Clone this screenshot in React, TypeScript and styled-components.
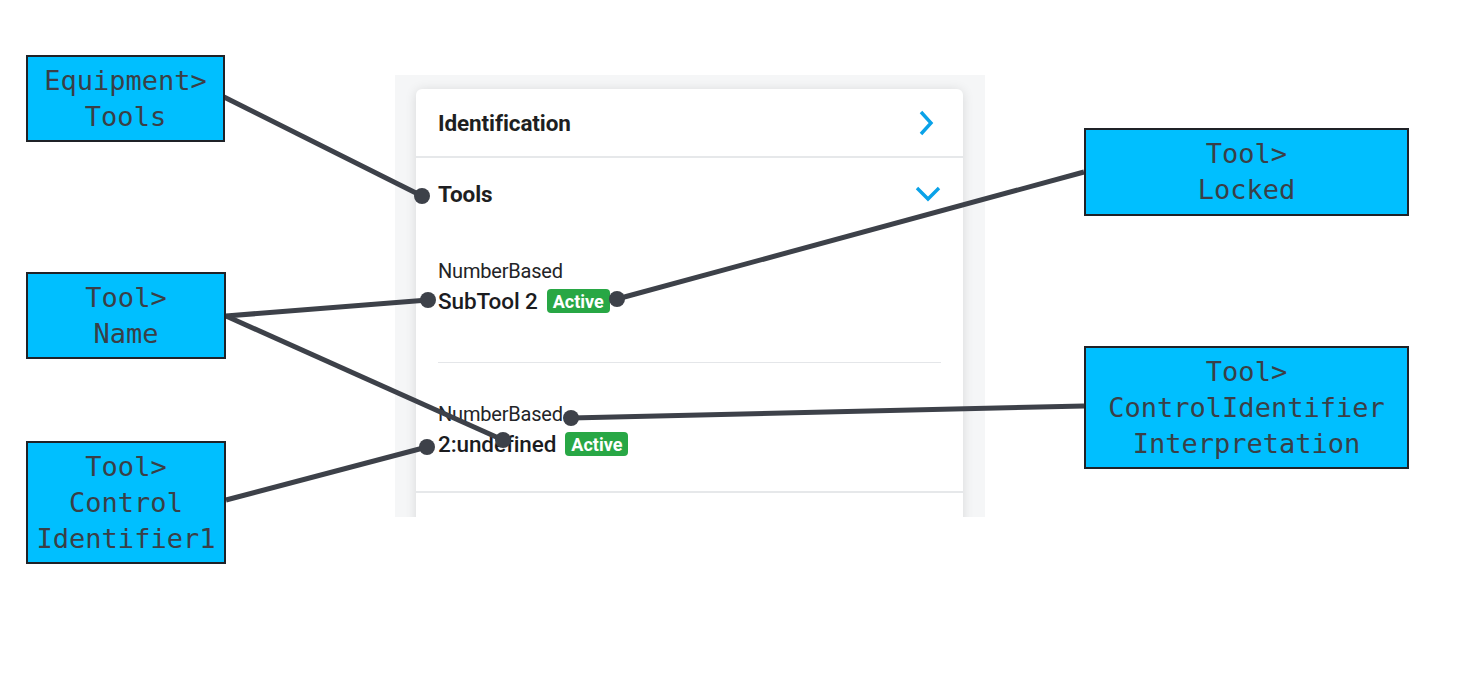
import React from "react";
import styled, { createGlobalStyle } from "styled-components";

const GlobalStyle = createGlobalStyle`
  html, body { margin: 0; padding: 0; background: #ffffff; }
  body { font-family: Roboto, "Liberation Sans", sans-serif; }
  * { box-sizing: border-box; }
`;

const Canvas = styled.div`
  position: relative;
  width: 1459px;
  height: 680px;
  overflow: hidden;
  background: #ffffff;
  padding: 75px 0 0 395px;
`;

const Backdrop = styled.div`
  width: 590px;
  height: 442px;
  background: #f5f6f7;
  overflow: hidden;
  padding: 14px 0 0 21px;
`;

const Card = styled.div`
  width: 547px;
  background: #ffffff;
  border-radius: 6px 6px 0 0;
  box-shadow: 0 1px 12px rgba(0, 0, 0, 0.12);
`;

const SectionHeader = styled.div<{ $h: number; $border?: boolean }>`
  height: ${(p) => p.$h}px;
  display: flex;
  align-items: center;
  justify-content: space-between;
  padding: 0 22px;
  border-bottom: ${(p) => (p.$border ? "2px solid #e6e8ea" : "none")};
`;

const SectionTitle = styled.span`
  font-family: Roboto, "Liberation Sans", sans-serif;
  font-size: 22.5px;
  font-weight: 700;
  color: #1e1f22;
  letter-spacing: -0.1px;
`;

const Section = styled.div<{ $border?: boolean }>`
  border-bottom: ${(p) => (p.$border ? "2px solid #e6e8ea" : "none")};
`;

const ItemList = styled.div`
  padding: 0 22px;
`;

const Item = styled.div<{ $pt: number; $pb: number; $divider?: boolean }>`
  padding-top: ${(p) => p.$pt}px;
  padding-bottom: ${(p) => p.$pb}px;
  border-bottom: ${(p) => (p.$divider ? "1px solid #e4e6e9" : "none")};
`;

const ItemLabel = styled.div`
  font-size: 20px;
  line-height: 22px;
  color: #232427;
  font-weight: 400;
  letter-spacing: -0.2px;
`;

const ItemTitleRow = styled.div`
  display: flex;
  align-items: center;
  gap: 9px;
  height: 24px;
  margin-top: 7px;
`;

const ItemTitle = styled.span`
  font-size: 22.5px;
  font-weight: 500;
  color: #1b1c1f;
  letter-spacing: -0.1px;
`;

const Badge = styled.span`
  display: inline-flex;
  align-items: center;
  height: 24px;
  padding: 0 6px;
  border-radius: 4px;
  background: #28a745;
  color: #ffffff;
  font-size: 18px;
  font-weight: 700;
`;

const Chevron = styled.svg`
  display: block;
  flex: none;
`;

const Callout = styled.div<{ $x: number; $y: number; $w: number; $h: number }>`
  position: absolute;
  left: ${(p) => p.$x}px;
  top: ${(p) => p.$y}px;
  width: ${(p) => p.$w}px;
  height: ${(p) => p.$h}px;
  background: #00bfff;
  border: 2px solid #1f2227;
  display: flex;
  align-items: center;
  justify-content: center;
  text-align: center;
  font-family: "DejaVu Sans Mono", "Liberation Mono", monospace;
  font-size: 27px;
  line-height: 36px;
  color: #3a3f47;
  white-space: pre;
`;

const Connectors = styled.svg`
  position: absolute;
  left: 0;
  top: 0;
  pointer-events: none;
`;

const RightChevron = () => (
  <Chevron width="24" height="26" viewBox="0 0 24 26">
    <path d="M4 2 L14 13 L4 24" fill="none" stroke="#0aa2e8" strokeWidth="3.4" />
  </Chevron>
);

const DownChevron = () => (
  <Chevron width="26" height="18" viewBox="0 0 26 18">
    <path d="M2 3 L13 14 L24 3" fill="none" stroke="#0aa2e8" strokeWidth="3.4" />
  </Chevron>
);

const callouts = [
  { x: 26, y: 55, w: 199, h: 87, text: "Equipment>\nTools" },
  { x: 26, y: 272, w: 200, h: 87, text: "Tool>\nName" },
  { x: 26, y: 441, w: 200, h: 123, text: "Tool>\nControl\nIdentifier1" },
  { x: 1084, y: 128, w: 325, h: 88, text: "Tool>\nLocked" },
  { x: 1084, y: 346, w: 325, h: 123, text: "Tool>\nControlIdentifier\nInterpretation" },
];

const lines = [
  { x1: 224, y1: 97, x2: 422, y2: 196 },
  { x1: 226, y1: 316, x2: 428, y2: 300 },
  { x1: 226, y1: 316, x2: 503, y2: 440 },
  { x1: 226, y1: 500, x2: 427, y2: 447 },
  { x1: 1084, y1: 172, x2: 617, y2: 299 },
  { x1: 1084, y1: 406, x2: 571, y2: 418 },
];

export default function App() {
  return (
    <>
      <GlobalStyle />
      <Canvas>
        <Backdrop>
          <Card>
            <SectionHeader $h={69} $border>
              <SectionTitle>Identification</SectionTitle>
              <RightChevron />
            </SectionHeader>
            <Section $border>
              <SectionHeader $h={72}>
                <SectionTitle>Tools</SectionTitle>
                <DownChevron />
              </SectionHeader>
              <ItemList>
                <Item $pt={30} $pb={49} $divider>
                  <ItemLabel>NumberBased</ItemLabel>
                  <ItemTitleRow>
                    <ItemTitle>SubTool 2</ItemTitle>
                    <Badge>Active</Badge>
                  </ItemTitleRow>
                </Item>
                <Item $pt={40} $pb={35}>
                  <ItemLabel>NumberBased</ItemLabel>
                  <ItemTitleRow>
                    <ItemTitle>2:undefined</ItemTitle>
                    <Badge>Active</Badge>
                  </ItemTitleRow>
                </Item>
              </ItemList>
            </Section>
            <SectionHeader $h={60} />
          </Card>
        </Backdrop>

        <Connectors width="1459" height="680" viewBox="0 0 1459 680">
          {lines.map((l, i) => (
            <g key={i}>
              <line
                x1={l.x1}
                y1={l.y1}
                x2={l.x2}
                y2={l.y2}
                stroke="#3d4149"
                strokeWidth="5"
              />
              <circle cx={l.x2} cy={l.y2} r="8" fill="#3d4149" />
            </g>
          ))}
        </Connectors>

        {callouts.map((c, i) => (
          <Callout key={i} $x={c.x} $y={c.y} $w={c.w} $h={c.h}>
            {c.text}
          </Callout>
        ))}
      </Canvas>
    </>
  );
}
